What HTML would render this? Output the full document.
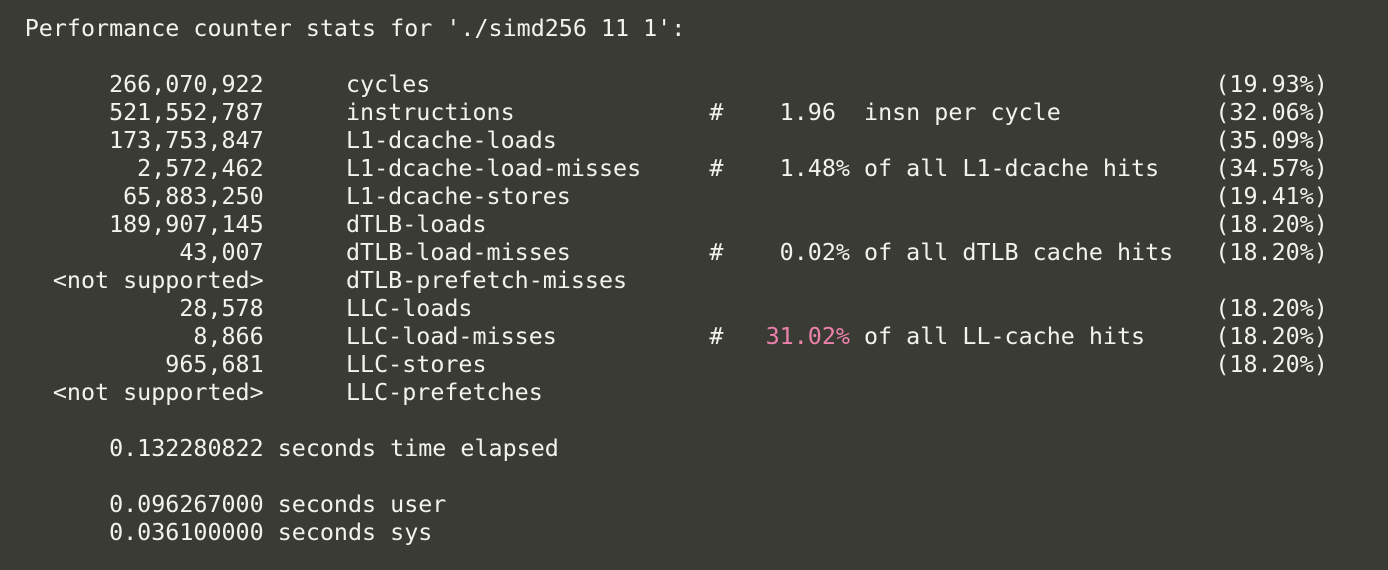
<!DOCTYPE html>
<html><head><meta charset="utf-8"><style>
html,body{margin:0;padding:0;background:#3b3b36;width:1388px;height:570px;overflow:hidden}
pre{margin:0;padding:14px 0 0 6.7px;font-family:"DejaVu Sans Mono","Liberation Mono",monospace;font-size:23.35px;line-height:28px;color:#f3f3ec;white-space:pre}
.p{color:#ec82ab}
.a{position:relative;left:4px}
.b{position:relative;left:2px}
</style></head><body><pre><span class="a"> Performance counter stats for './simd256 11 1':</span>

<span class="a">       266,070,922</span>      <span class="b">cycles</span>                                                        (19.93%)
<span class="a">       521,552,787</span>      <span class="b">instructions</span>              #    1.96  insn per cycle           (32.06%)
<span class="a">       173,753,847</span>      <span class="b">L1-dcache-loads</span>                                               (35.09%)
<span class="a">         2,572,462</span>      <span class="b">L1-dcache-load-misses</span>     #    1.48% of all L1-dcache hits    (34.57%)
<span class="a">        65,883,250</span>      <span class="b">L1-dcache-stores</span>                                              (19.41%)
<span class="a">       189,907,145</span>      <span class="b">dTLB-loads</span>                                                    (18.20%)
<span class="a">            43,007</span>      <span class="b">dTLB-load-misses</span>          #    0.02% of all dTLB cache hits   (18.20%)
<span class="a">   &lt;not supported&gt;</span>      <span class="b">dTLB-prefetch-misses</span>
<span class="a">            28,578</span>      <span class="b">LLC-loads</span>                                                     (18.20%)
<span class="a">             8,866</span>      <span class="b">LLC-load-misses</span>           #   <span class="p">31.02%</span> of all LL-cache hits     (18.20%)
<span class="a">           965,681</span>      <span class="b">LLC-stores</span>                                                    (18.20%)
<span class="a">   &lt;not supported&gt;</span>      <span class="b">LLC-prefetches</span>

<span class="a">       0.132280822 seconds time elapsed</span>

<span class="a">       0.096267000 seconds user</span>
<span class="a">       0.036100000 seconds sys</span>
</pre></body></html>
